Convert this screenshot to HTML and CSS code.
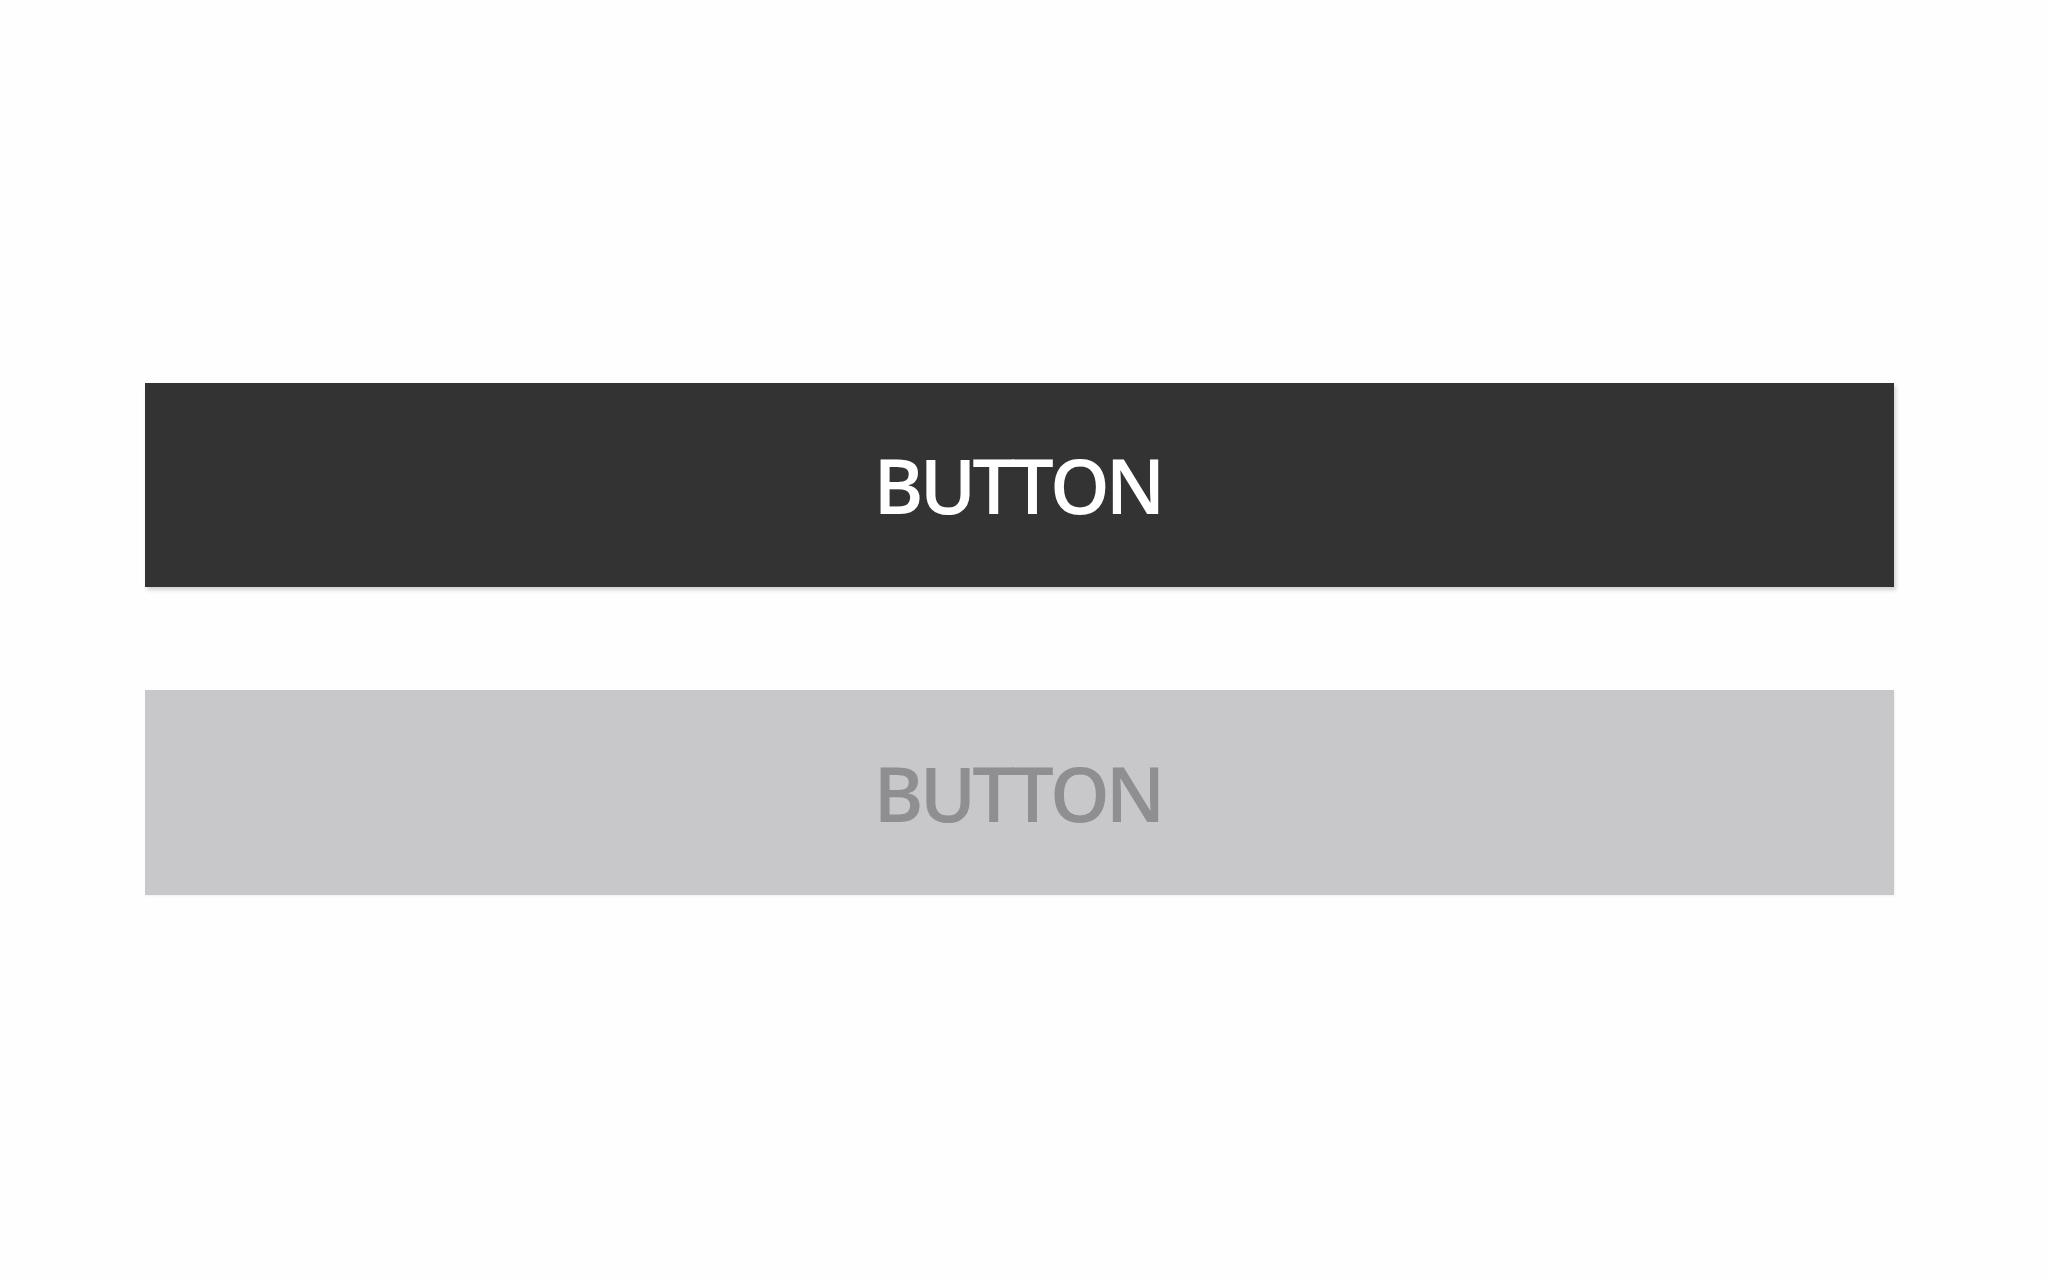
FILE: index.html
```html
<!DOCTYPE html>
<html>
<head>
<meta charset="utf-8">
<link rel="stylesheet" href="styles.css">
</head>
<body>
<main class="stack">
  <button class="btn btn-primary">BUTTON</button>
  <button class="btn btn-disabled" disabled>BUTTON</button>
</main>
</body>
</html>
```
FILE: styles.css
```css
html, body {
  margin: 0;
  padding: 0;
  background: #fefefe;
  width: 2048px;
  height: 1280px;
  overflow: hidden;
}
.stack {
  display: flex;
  flex-direction: column;
  gap: 103px;
  padding: 383px 0 0 145px;
  width: 1749px;
}
.btn {
  display: flex;
  align-items: center;
  justify-content: center;
  width: 1749px;
  height: 204px;
  border: 0;
  margin: 0;
  padding: 0 4px 0 0;
  font-family: "Open Sans", sans-serif;
  font-size: 76px;
  font-weight: 600;
  letter-spacing: -4px;
  line-height: 1;
}
.btn-primary {
  background: #343334;
  color: #ffffff;
  box-shadow: 2px 3px 4px rgba(0, 0, 0, 0.18);
}
.btn-disabled {
  height: 205px;
  background: #c8c7c9;
  color: #8f8e90;
  box-shadow: 1px 1px 2px rgba(0, 0, 0, 0.06);
}
```
